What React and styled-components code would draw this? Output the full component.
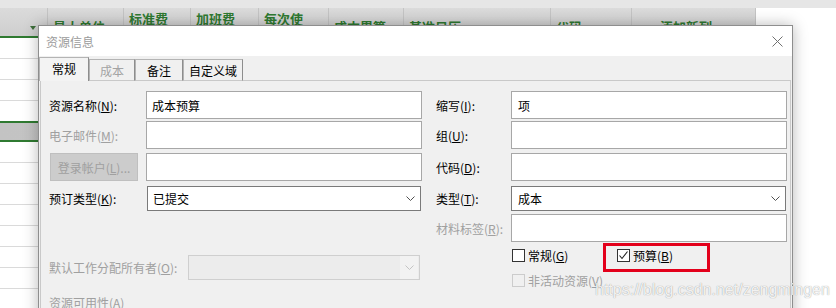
import React from "react";
import styled, { createGlobalStyle } from "styled-components";

const GlobalStyle = createGlobalStyle`
  html, body { margin: 0; padding: 0; }
  body {
    background: #fff;
    font-family: "Noto Sans CJK SC", "Microsoft YaHei", sans-serif;
    font-size: 12px;
  }
`;

const Screen = styled.div`
  position: relative;
  width: 836px;
  height: 308px;
  overflow: hidden;
  background: #fff;
`;

const TopStrip = styled.div`
  height: 8px;
  background: #e6e6e6;
`;

const Sheet = styled.div`
  width: 756px;
`;

const HeaderRow = styled.div`
  display: flex;
  align-items: stretch;
  height: 30px;
  box-sizing: border-box;
  border-bottom: 2px solid #2f7a31;
  background: linear-gradient(#dbdbdb, #cecece);
`;

const HeaderCell = styled.div`
  flex: none;
  width: ${(p) => p.$w}px;
  box-sizing: border-box;
  padding: 8px 0 0 ${(p) => p.$pl ?? 5}px;
  display: flex;
  align-items: center;
  border-right: 1px solid #c4c4c4;
  color: #2f7a31;
  font-size: 13px;
  font-weight: bold;
  line-height: 15px;
  white-space: nowrap;
`;

const CornerCell = styled.div`
  flex: none;
  width: 48px;
  box-sizing: border-box;
  display: flex;
  justify-content: flex-end;
  align-items: flex-end;
  padding: 0 11px 6px 0;
  border-right: 1px solid #c4c4c4;
`;

const CornerMark = styled.div`
  width: 0;
  height: 0;
  border-left: 3px solid transparent;
  border-right: 3px solid transparent;
  border-top: 4px solid #3d6e3a;
`;

const SheetRow = styled.div`
  height: 21px;
  box-sizing: border-box;
  border-bottom: ${(p) => (p.$selected ? "2px solid #2f7a31" : "1px solid #dadada")};
  border-top: ${(p) => (p.$selected ? "2px solid #2f7a31" : "none")};
  margin-top: ${(p) => (p.$selected ? "-1px" : "0")};
  background: ${(p) => (p.$selected ? "linear-gradient(90deg, #c3c3c3, #cbcbcb)" : "#fff")};
`;

const Dialog = styled.div`
  position: absolute;
  left: 38px;
  top: 25px;
  width: 755px;
  height: 310px;
  box-sizing: border-box;
  border: 1px solid #8e8e8e;
  background: #f0f0f0;
  box-shadow: 0 0 14px rgba(0, 0, 0, 0.28);
  display: flex;
  flex-direction: column;
`;

const TitleBar = styled.div`
  height: 30px;
  flex: none;
  display: flex;
  align-items: center;
  justify-content: space-between;
  padding: 0 9px 0 7px;
  background: #fff;
  color: #9b9b9b;
  font-size: 12px;
`;

const Tabs = styled.div`
  display: flex;
  align-items: flex-end;
  height: 24px;
  margin-top: 1px;
  position: relative;
  z-index: 1;
`;

const Tab = styled.div`
  width: ${(p) => p.$w}px;
  height: ${(p) => (p.$active ? 24 : 22)}px;
  box-sizing: border-box;
  display: flex;
  align-items: center;
  justify-content: center;
  border: 1px solid #b4b4b4;
  border-right-color: #8d8d8d;
  border-bottom: ${(p) => (p.$active ? "none" : "1px solid #c9c9c9")};
  background: ${(p) => (p.$active ? "#f3f3f3" : "#f0f0f0")};
  color: ${(p) => (p.$disabled ? "#a3a3a3" : "#000")};
  padding-bottom: ${(p) => (p.$active ? 2 : 0)}px;
`;

const TabPage = styled.div`
  flex: 1;
  margin: -1px 1px 0 1px;
  border: 1px solid #c9c9c9;
  padding: 10px 0 0 8px;
  display: grid;
  grid-template-columns: 373px 351px;
  column-gap: 14px;
  align-items: start;
`;

const Column = styled.div`
  display: flex;
  flex-direction: column;
`;

const Field = styled.div`
  display: flex;
  align-items: center;
  height: ${(p) => p.$h ?? 28}px;
  margin-top: ${(p) => p.$mt ?? 0}px;
  position: relative;
`;

const Label = styled.div`
  flex: none;
  width: ${(p) => p.$w}px;
  color: ${(p) => (p.$disabled ? "#a0a0a0" : "#000")};
  white-space: nowrap;
`;

const Mn = styled.span`
  text-decoration: underline;
`;

const TextBox = styled.div`
  flex: 1;
  height: 100%;
  box-sizing: border-box;
  border: 1px solid #a7a7a7;
  background: #fff;
  padding-left: ${(p) => p.$pl ?? 5}px;
  display: flex;
  align-items: center;
  color: #000;
`;

const ComboBox = styled.div`
  flex: ${(p) => (p.$w ? "none" : "1")};
  width: ${(p) => (p.$w ? `${p.$w}px` : "auto")};
  height: 100%;
  box-sizing: border-box;
  margin-right: 1px;
  border: 1px solid ${(p) => (p.$disabled ? "#cfcfcf" : "#7a7a7a")};
  background: ${(p) => (p.$disabled ? "#ececec" : "#fff")};
  display: flex;
  align-items: center;
  justify-content: space-between;
  padding-left: ${(p) => p.$pl ?? 5}px;
  color: #000;
`;

const ArrowBox = styled.div`
  align-self: stretch;
  width: 18px;
  display: flex;
  align-items: center;
  justify-content: center;
  background: ${(p) => (p.$disabled ? "#f2f2f2" : "transparent")};
  margin-right: 1px;
`;

const FakeButton = styled.div`
  flex: none;
  width: 88px;
  height: 100%;
  box-sizing: border-box;
  margin: 0 8px 0 1px;
  border: 1px solid #bfbfbf;
  background: #cccccc;
  color: #a0a0a0;
  display: flex;
  align-items: center;
  justify-content: center;
`;

const CheckRow = styled.div`
  display: grid;
  grid-template-columns: 105px auto;
  align-items: center;
  height: 19px;
  margin-top: ${(p) => p.$mt}px;
  padding-left: 76px;
`;

const CheckItem = styled.div`
  position: relative;
  display: flex;
  align-items: center;
  color: ${(p) => (p.$disabled ? "#a0a0a0" : "#000")};
  white-space: nowrap;
`;

const Box = styled.div`
  width: 13px;
  height: 13px;
  box-sizing: border-box;
  border: 1px solid ${(p) => (p.$disabled ? "#cccccc" : "#333")};
  background: ${(p) => (p.$disabled ? "#f0f0f0" : "#fff")};
  margin-right: 3px;
  display: flex;
  align-items: center;
  justify-content: center;
`;

const Highlight = styled.div`
  position: absolute;
  left: -14px;
  top: -4px;
  width: 107px;
  height: 29px;
  box-sizing: border-box;
  border: 3px solid #e3001b;
  pointer-events: none;
`;

const Watermark = styled.div`
  position: absolute;
  left: 595px;
  top: 281px;
  font-family: "Liberation Sans", Arial, sans-serif;
  font-size: 16px;
  line-height: 18px;
  color: rgba(255, 255, 255, 0.9);
  text-shadow: 0 0 1px rgba(0, 0, 0, 0.45);
  white-space: nowrap;
`;

const columns = [
  { w: 76, lines: ["最大单位"] },
  { w: 67, lines: ["标准费", "率"] },
  { w: 68, lines: ["加班费", "率"] },
  { w: 70, lines: ["每次使", "用成本"] },
  { w: 75, lines: ["成本累算"] },
  { w: 147, lines: ["基准日历"] },
  { w: 81, lines: ["代码"] },
  { w: 124, lines: ["添加新列"], pl: 28 },
];

const Chevron = ({ color = "#505050" }) => (
  <svg width="9" height="5" viewBox="0 0 9 5">
    <polyline points="0.5,0.5 4.5,4.5 8.5,0.5" fill="none" stroke={color} strokeWidth="1" />
  </svg>
);

const CloseIcon = () => (
  <svg width="11" height="11" viewBox="0 0 11 11">
    <path d="M0.5 0.5 L10.5 10.5 M10.5 0.5 L0.5 10.5" stroke="#707070" strokeWidth="1" />
  </svg>
);

const CheckMark = () => (
  <svg width="11" height="11" viewBox="0 0 11 11">
    <polyline points="1.5,5.5 4,8.5 9.5,1.5" fill="none" stroke="#222" strokeWidth="1.1" />
  </svg>
);

export default function App() {
  return (
    <>
      <GlobalStyle />
      <Screen>
        <TopStrip />
        <Sheet>
          <HeaderRow>
            <CornerCell>
              <CornerMark />
            </CornerCell>
            {columns.map((c, i) => (
              <HeaderCell key={i} $w={c.w} $pl={c.pl}>
                <div>
                  {c.lines.map((l, j) => (
                    <div key={j}>{l}</div>
                  ))}
                </div>
              </HeaderCell>
            ))}
          </HeaderRow>
          {Array.from({ length: 13 }).map((_, i) => (
            <SheetRow key={i} $selected={i === 4} />
          ))}
        </Sheet>

        <Dialog>
          <TitleBar>
            <span>资源信息</span>
            <CloseIcon />
          </TitleBar>
          <Tabs>
            <Tab $w={50} $active>常规</Tab>
            <Tab $w={46} $disabled>成本</Tab>
            <Tab $w={48}>备注</Tab>
            <Tab $w={60}>自定义域</Tab>
          </Tabs>
          <TabPage>
            <Column>
              <Field>
                <Label $w={97}>
                  资源名称(<Mn>N</Mn>):
                </Label>
                <TextBox>成本预算</TextBox>
              </Field>
              <Field $mt={2}>
                <Label $w={97} $disabled>
                  电子邮件(<Mn>M</Mn>):
                </Label>
                <TextBox />
              </Field>
              <Field $mt={4}>
                <FakeButton>
                  登录帐户(<Mn>L</Mn>)...
                </FakeButton>
                <TextBox />
              </Field>
              <Field $mt={5} $h={25}>
                <Label $w={98}>
                  预订类型(<Mn>K</Mn>):
                </Label>
                <ComboBox>
                  已提交
                  <ArrowBox>
                    <Chevron />
                  </ArrowBox>
                </ComboBox>
              </Field>
              <Field $mt={44} $h={25}>
                <Label $w={139} $disabled>
                  默认工作分配所有者(<Mn>O</Mn>):
                </Label>
                <ComboBox $w={232} $disabled>
                  <span />
                  <ArrowBox $disabled>
                    <Chevron color="#c4c4c4" />
                  </ArrowBox>
                </ComboBox>
              </Field>
              <Field $mt={14} $h={17}>
                <Label $w={120} $disabled>
                  资源可用性(A)
                </Label>
              </Field>
            </Column>

            <Column>
              <Field>
                <Label $w={75}>
                  缩写(<Mn>I</Mn>):
                </Label>
                <TextBox $pl={6}>项</TextBox>
              </Field>
              <Field $mt={2}>
                <Label $w={75}>
                  组(<Mn>U</Mn>):
                </Label>
                <TextBox />
              </Field>
              <Field $mt={4}>
                <Label $w={75}>
                  代码(<Mn>D</Mn>):
                </Label>
                <TextBox />
              </Field>
              <Field $mt={5} $h={25}>
                <Label $w={75}>
                  类型(<Mn>T</Mn>):
                </Label>
                <ComboBox $pl={6}>
                  成本
                  <ArrowBox>
                    <Chevron />
                  </ArrowBox>
                </ComboBox>
              </Field>
              <Field $mt={3}>
                <Label $w={75} $disabled>
                  材料标签(<Mn>R</Mn>):
                </Label>
                <TextBox />
              </Field>
              <CheckRow $mt={4}>
                <CheckItem>
                  <Box />
                  常规(<Mn>G</Mn>)
                </CheckItem>
                <CheckItem>
                  <Box>
                    <CheckMark />
                  </Box>
                  预算(<Mn>B</Mn>)
                  <Highlight />
                </CheckItem>
              </CheckRow>
              <CheckRow $mt={6}>
                <CheckItem $disabled>
                  <Box $disabled />
                  非活动资源(<Mn>V</Mn>)
                </CheckItem>
              </CheckRow>
            </Column>
          </TabPage>
        </Dialog>

        <Watermark>https://blog.csdn.net/zengmingen</Watermark>
      </Screen>
    </>
  );
}
